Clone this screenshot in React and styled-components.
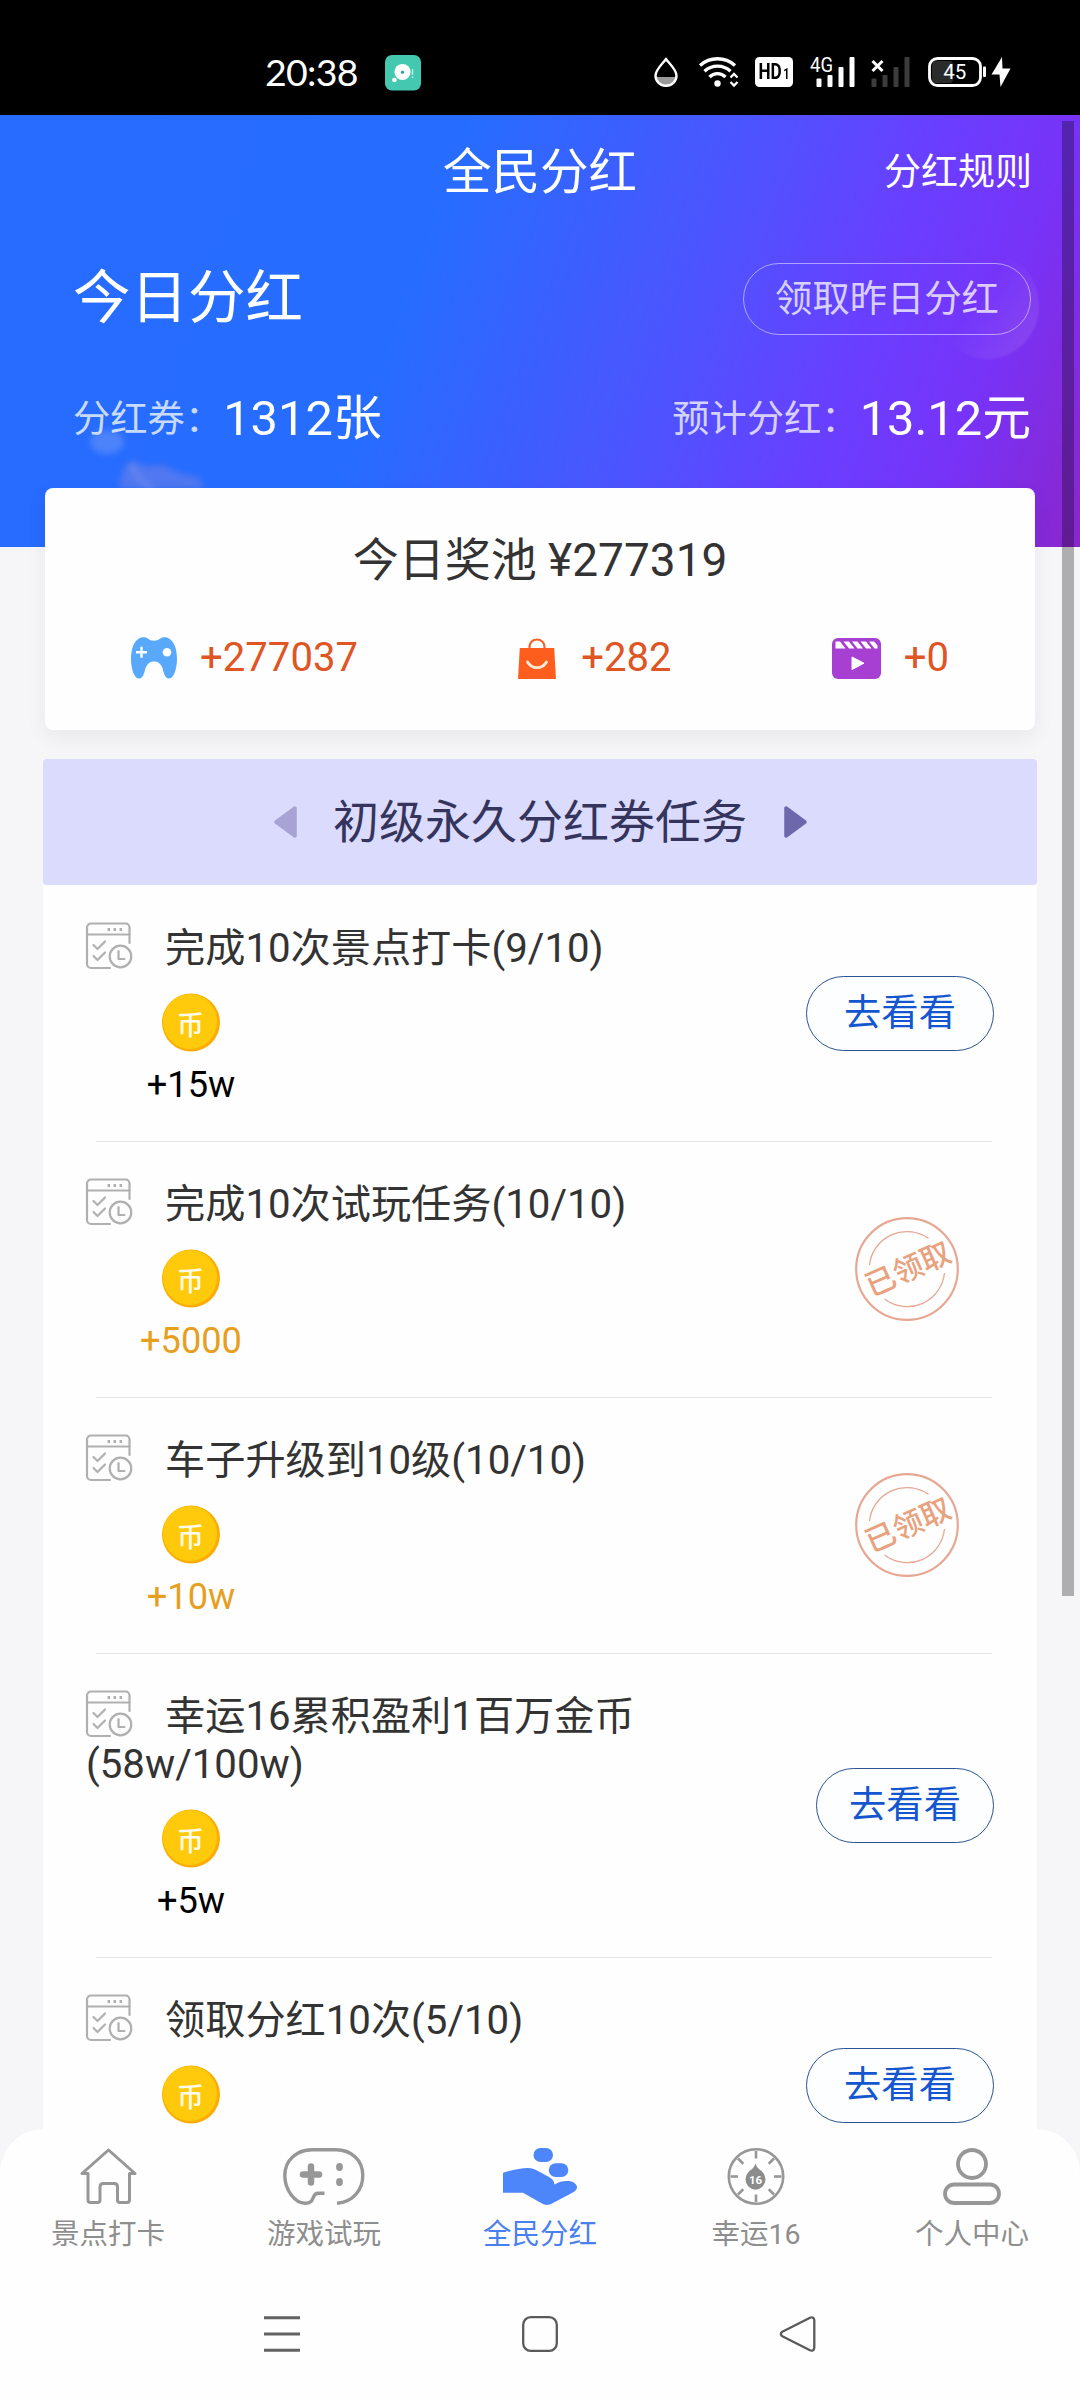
import React from 'react';
import styled, { createGlobalStyle } from 'styled-components';

const GlobalStyle = createGlobalStyle`
  *, *::before, *::after { box-sizing: border-box; }
  html, body { margin: 0; padding: 0; }
  body {
    font-family: Roboto, "Noto Sans CJK SC", sans-serif;
    font-weight: 400;
    color: #333;
  }
  svg { display: block; flex: none; overflow: visible; }
`;

const Screen = styled.div`
  width: 1080px;
  height: 2400px;
  display: flex;
  flex-direction: column;
  overflow: hidden;
  background: #f6f6f8;
`;

/* ---------- status bar ---------- */

const StatusBar = styled.div`
  flex: none;
  height: 115px;
  padding: 29px 69px 0 265px;
  display: flex;
  justify-content: space-between;
  align-items: flex-start;
  background: #000;
  color: #fff;
`;

const StatusGroup = styled.div`
  height: 86px;
  display: flex;
  align-items: flex-start;
  gap: ${(p) => p.$gap}px;
`;

const Clock = styled.div`
  width: 95px;
  margin-top: 21px;
  font-family: Lato, Roboto, sans-serif;
  font-size: 37.5px;
  line-height: 44px;
  letter-spacing: -0.7px;
  white-space: nowrap;
`;

const StatusIcon = styled.svg`
  margin-top: ${(p) => p.$mt || 28}px;
  margin-left: ${(p) => p.$ml || 0}px;
`;

const HdBadge = styled.div`
  width: 38px;
  height: 30px;
  margin: 28px 0 0 16.5px;
  display: flex;
  justify-content: center;
  border-radius: 4.5px;
  background: #fff;
  color: #000;
  font-weight: 700;
`;

const HdLetters = styled.div`
  flex: none;
  display: flex;
  align-items: baseline;
  gap: 2px;
  transform: scaleX(0.78);
`;

const HdLetter = styled.span`
  font-size: ${(p) => p.$size}px;
  line-height: 30px;
`;

/* ---------- scroll area & header ---------- */

const ScrollArea = styled.div`
  position: relative;
  flex: 1;
  min-height: 0;
  overflow: hidden;
`;

const ScrollThumb = styled.div`
  position: absolute;
  top: 6px;
  right: 6px;
  width: 12px;
  height: 1475px;
  background: rgba(0, 0, 0, 0.29);
`;

const Hero = styled.header`
  position: relative;
  height: 432px;
  color: #fff;
  background: linear-gradient(
    110deg,
    #276bff 0%,
    #266dff 38%,
    #3a60ff 50%,
    #4e53ff 62%,
    #693fff 76%,
    #7733f8 87%,
    #8a26cc 100%
  );
`;

const Bubble = styled.div`
  position: absolute;
  left: 936px;
  top: 138px;
  width: 103px;
  height: 106px;
  border-radius: 50%;
  background: linear-gradient(125deg, rgba(255, 255, 255, 0) 40%, rgba(255, 255, 255, 0.12) 100%);
  filter: blur(1px);
`;

const Clouds = styled.svg`
  position: absolute;
  left: 85px;
  top: 312px;
  filter: blur(3px);
`;

const HeroBody = styled.div`
  position: relative;
  display: flex;
  flex-direction: column;
`;

const TitleBar = styled.div`
  height: 114px;
  padding: 2px 48px 0;
  display: grid;
  grid-template-columns: 1fr auto 1fr;
  align-items: center;
`;

const PageTitle = styled.h1`
  grid-column: 2;
  margin: 0;
  font-size: 48.5px;
  line-height: 60px;
  font-weight: 400;
`;

const RulesLink = styled.a`
  justify-self: end;
  font-size: 37px;
  line-height: 44px;
`;

const HeroRow = styled.div`
  height: ${(p) => p.$h}px;
  padding: 0 49px 0 73px;
  display: flex;
  justify-content: space-between;
  align-items: center;
`;

const TodayTitle = styled.div`
  font-size: 57.5px;
  line-height: 72px;
`;

const ClaimButton = styled.button`
  width: 288px;
  height: 72px;
  padding: 0;
  border: 1.5px solid rgba(255, 255, 255, 0.5);
  border-radius: 36px;
  background: transparent;
  color: rgba(255, 255, 255, 0.75);
  font: inherit;
  font-size: 37.3px;
  line-height: 66px;
`;

const Stat = styled.div`
  display: flex;
  align-items: center;
`;

const StatLabel = styled.span`
  font-size: 37.3px;
  line-height: 48px;
  color: rgba(255, 255, 255, 0.75);
`;

const StatValue = styled.span`
  margin-left: 1px;
  font-size: 48.8px;
  line-height: 60px;
`;

/* ---------- pool card ---------- */

const PoolCard = styled.section`
  position: relative;
  height: 242px;
  margin: -59px 45px 29px;
  padding-top: 37.5px;
  border-radius: 8px;
  background: #fefefe;
  box-shadow: 0 8px 22px rgba(0, 0, 0, 0.06);
`;

const PoolTitle = styled.h2`
  margin: 0;
  font-size: 46px;
  line-height: 68px;
  font-weight: 400;
  text-align: center;
`;

const PoolItems = styled.div`
  margin-top: 39.5px;
  padding: 0 6px;
  display: flex;
  justify-content: space-around;
`;

const PoolItem = styled.div`
  height: 50px;
  display: flex;
  align-items: center;
  gap: ${(p) => p.$gap}px;
  font-size: 40.1px;
  line-height: 50px;
  color: #df5524;
`;

/* ---------- task list ---------- */

const TaskPanel = styled.section`
  margin: 0 43px;
  background: #fefefe;
`;

const LevelBar = styled.div`
  height: 126px;
  display: flex;
  justify-content: center;
  align-items: center;
  gap: 36.5px;
  border-radius: 3px;
  background: #dbdbfd;
  color: #34345c;
  font-size: 46px;
  line-height: 60px;
`;

const TaskRow = styled.div`
  padding: 0 43px;
  display: flex;
  justify-content: space-between;
  align-items: center;
`;

const Divider = styled.hr`
  height: 1px;
  margin: 0 45px -1px 53px;
  border: 0;
  background: #e3e3e8;
`;

const TaskMain = styled.div`
  width: 600px;
  height: ${(p) => (p.$tall ? 304 : 256)}px;
  padding-top: 37px;
`;

const TaskTitle = styled.div`
  font-size: 40.2px;
  line-height: 48px;
  svg {
    display: inline-block;
    margin-right: 32px;
    vertical-align: -7px;
  }
`;

const Reward = styled.div`
  width: 210px;
  margin-top: 19.5px;
  display: flex;
  flex-direction: column;
  align-items: center;
  font-size: 36.2px;
  line-height: 46px;
  color: ${(p) => (p.$claimed ? '#e69f1e' : '#000')};
`;

const RewardAmount = styled.span`
  margin-top: 10.5px;
`;

const GoButton = styled.button`
  width: ${(p) => (p.$narrow ? 178 : 188)}px;
  height: 75px;
  padding: 0;
  border: 1.5px solid #2c5293;
  border-radius: 38px;
  background: #fdfeff;
  color: #1456cf;
  font: inherit;
  font-size: 37.3px;
  line-height: 70px;
`;

const StampSvg = styled.svg`
  margin-right: 35px;
`;

/* ---------- bottom bars ---------- */

const TabBar = styled.nav`
  flex: none;
  height: 141px;
  padding-top: 19px;
  display: grid;
  grid-template-columns: repeat(5, 1fr);
  border-radius: 44px 44px 0 0;
  background: #fefefe;
`;

const Tab = styled.a`
  display: flex;
  flex-direction: column;
  align-items: center;
  gap: 11px;
  font-size: 28.5px;
  line-height: 38px;
  color: ${(p) => (p.$active ? '#4a80ee' : '#8e8e8e')};
`;

const SystemNav = styled.div`
  flex: none;
  height: 130px;
  padding: 0 264px 3px;
  display: flex;
  justify-content: space-between;
  align-items: center;
  background: #fefefe;
`;

/* ---------- icons ---------- */

const AppBadge = () => (
  <StatusIcon width="36" height="36" viewBox="0 0 36 36" $mt={25.5}>
    <rect width="36" height="35.5" rx="7" fill="#45c8b0" />
    <circle cx="17.5" cy="17" r="8" fill="#fff" />
    <circle cx="17.5" cy="17.2" r="1.6" fill="#2fa08c" />
    <circle cx="9.4" cy="25" r="2.3" fill="#fff" />
    <path d="M27.5 14v6M27.5 21.5v1.5" stroke="#b9f0e5" strokeWidth="1.5" />
  </StatusIcon>
);

const DropIcon = () => (
  <StatusIcon width="24" height="30" viewBox="0 0 24 30">
    <path d="M2 20 A10 10 0 0 0 22 20Z" fill="#9b9b9b" />
    <path
      d="M12 1.8C9.5 6 1.5 12.5 1.5 18.7a10.5 10 0 0 0 21 0C22.5 12.5 14.5 6 12 1.8Z"
      fill="none" stroke="#fff" strokeWidth="2.4" strokeLinejoin="round"
    />
  </StatusIcon>
);

const WifiIcon = () => (
  <StatusIcon width="39" height="30" viewBox="0 0 39 30" $ml={21}>
    <g fill="none" stroke="#fff" strokeWidth="3.4">
      <path d="M1 8.5C11-.5 26-.5 36 8.5" />
      <path d="M5.5 14.2C13 7.4 24 7.4 31.5 14.2" />
      <path d="M10.5 20C15 15.5 22 15.5 26.5 20" />
    </g>
    <circle cx="18.5" cy="26.5" r="3.2" fill="#fff" />
    <path d="M31.5 20.5L35 17l3.5 3.5M31.5 25L35 28.5 38.5 25" fill="none" stroke="#fff" strokeWidth="2.3" />
  </StatusIcon>
);

const SignalIcon = () => (
  <StatusIcon width="45" height="30" viewBox="0 0 45 30" $ml={17.5}>
    <text x="0" y="15" fontSize="19.5" textLength="23" lengthAdjust="spacingAndGlyphs" fill="#fff">4G</text>
    <g fill="#fff">
      <rect x="6.5" y="21.5" width="5" height="8.5" rx="1" />
      <rect x="17.5" y="18" width="5" height="12" rx="1" />
      <rect x="28.5" y="10" width="5" height="20" rx="1" />
      <rect x="39.5" y="0" width="5" height="30" rx="1" />
    </g>
  </StatusIcon>
);

const NoSignalIcon = () => (
  <StatusIcon width="39" height="30" viewBox="0 0 39 30" $ml={16}>
    <path d="M1.5 4l10 10M11.5 4l-10 10" stroke="#fff" strokeWidth="3" />
    <g fill="#3c3c3c">
      <rect x="0.5" y="21.5" width="5" height="8.5" rx="1" />
      <rect x="11.5" y="18" width="5" height="12" rx="1" />
      <rect x="22.5" y="10" width="5" height="20" rx="1" />
      <rect x="33.5" y="0" width="5" height="30" rx="1" />
    </g>
  </StatusIcon>
);

const BatteryIcon = () => (
  <StatusIcon width="83" height="30" viewBox="0 0 83 30" $ml={18}>
    <rect x="4" y="4" width="21" height="22" rx="4" fill="#2b2b2b" />
    <rect x="1.5" y="1.5" width="51" height="27" rx="8" fill="none" stroke="#fff" strokeWidth="2.8" />
    <rect x="55" y="9.5" width="3" height="10.5" rx="1" fill="#fff" />
    <text x="26.8" y="22" fontSize="20.5" textAnchor="middle" fill="#fff">45</text>
    <path d="M74 0L63.5 17.5H71.5L72.5 30 82.5 11.5H74.5Z" fill="#fff" />
  </StatusIcon>
);

const PadIcon = () => (
  <svg width="46" height="42" viewBox="0 0 46 42">
    <path
      d="M10 .6C12 0 15 .2 17 1.8 20 4.4 26 4.4 29 1.8 31 .2 34 0 36 .6 43 3 46 12 46 22 46 31 43 41 38.5 41.5 33 42 32.5 33 31 30 29.5 26.5 27 24.5 23 24.5S16.5 26.5 15 30C13.5 33 13 42 7.5 41.5 3 41 0 31 0 22 0 12 3 3 10 .6Z"
      fill="#58a8fb"
    />
    <path d="M10.5 9.8v11M5 15.3h11" stroke="#fff" strokeWidth="2.4" />
    <circle cx="36" cy="15.3" r="4.3" fill="#fff" />
  </svg>
);

const BagIcon = () => (
  <svg width="38" height="41" viewBox="0 0 38 41">
    <path d="M11.5 11V8.5a7.5 7 0 0 1 15 0V11" fill="none" stroke="#f4622a" strokeWidth="2.2" />
    <path d="M1.8 10H36.2L38 41H0Z" fill="#fd5e1d" />
    <path d="M9.5 24c4.5 7.5 14.5 7.5 19 0" fill="none" stroke="#ffe9d6" strokeWidth="2.8" strokeLinecap="round" />
  </svg>
);

const FilmIcon = () => (
  <svg width="49" height="41" viewBox="0 0 49 41">
    <rect width="49" height="41" rx="6" fill="#a63fd2" />
    <path
      d="M3.5 3.5H8L13.5 10.5H3.5ZM11.5 3.5H17L22.5 10.5H17ZM20 3.5H25.5L31 10.5H25.5ZM28.5 3.5H34L39.5 10.5H34ZM37 3.5H42L45.5 7.5V10.5H42.5Z"
      fill="#fff"
    />
    <path d="M20 19v12.5l12-6.3Z" fill="#fff" stroke="#fff" strokeWidth="1" strokeLinejoin="round" />
  </svg>
);

const Arrow = ({ right }) => (
  <svg width="23" height="32" viewBox="0 0 23 32">
    <path
      d={right ? 'M2 2V30L21 16Z' : 'M21 2V30L2 16Z'}
      fill={right ? '#6d67ac' : '#a7a3d4'}
      stroke={right ? '#6d67ac' : '#a7a3d4'}
      strokeWidth="3.5"
      strokeLinejoin="round"
    />
  </svg>
);

const TaskIcon = () => (
  <svg width="47" height="47" viewBox="0 0 47 47">
    <g fill="none" stroke="#b0b0b0" strokeWidth="2.2" strokeLinecap="round" strokeLinejoin="round">
      <path d="M43.5 21V5.5a4 4 0 0 0-4-4H5a4 4 0 0 0-4 4V42a4 4 0 0 0 4 4H24" />
      <path d="M1 12.5H43.5" />
      <path d="M7.5 23l4 4 7.5-7.5M7.5 34l4 4 7.5-7.5" />
      <circle cx="34.5" cy="34.5" r="10.8" />
      <path d="M32.5 29V37H38.5" />
    </g>
    <g fill="#b0b0b0">
      <rect x="21.5" y="6" width="2.6" height="3" />
      <rect x="27.5" y="6" width="2.6" height="3" />
      <rect x="33.5" y="6" width="2.6" height="3" />
    </g>
  </svg>
);

const Coin = () => (
  <svg width="58" height="59" viewBox="0 0 58 59">
    <circle cx="29" cy="29.5" r="29" fill="#fdac03" />
    <ellipse cx="28" cy="28.5" rx="27" ry="27.5" fill="#ffca0c" />
    <text x="28.5" y="42" fontSize="27" fontWeight="500" textAnchor="middle" fill="#fffbe8">币</text>
  </svg>
);

const ClaimedStamp = () => (
  <StampSvg width="104" height="104" viewBox="0 0 104 104">
    <g fill="none" stroke="#e6a893">
      <circle cx="52" cy="52" r="50.8" strokeWidth="2.2" />
      <path d="M14.5 48A37.5 37.5 0 0 1 73.5 21.5" strokeWidth="1.3" />
      <path d="M29.5 82A37.5 37.5 0 0 0 89.5 56" strokeWidth="1.3" />
    </g>
    <text
      x="53" y="63" fontSize="30" fontWeight="500" textAnchor="middle"
      fill="#e8a27e" transform="rotate(-24 52 52)"
    >
      已领取
    </text>
  </StampSvg>
);

const HomeIcon = () => (
  <svg width="57" height="57" viewBox="0 0 57 57">
    <path
      d="M28.5 2L2 25.5H8V52q0 2.5 2.5 2.5H17.5q2.5 0 2.5-2.5V39q0-3.5 3.5-3.5H34q3.5 0 3.5 3.5V52q0 2.5 2.5 2.5H47q2.5 0 2.5-2.5V25.5H55Z"
      fill="none" stroke="#979797" strokeWidth="3" strokeLinejoin="round"
    />
  </svg>
);

const GameIcon = () => (
  <svg width="82" height="57" viewBox="0 0 82 57">
    <g fill="none" stroke="#979797">
      <path
        d="M54 55.3C70 54 79.8 42 79.8 27.5 79.8 12 68 1.8 53 1.8H29C14 1.8 1.8 12 1.8 27.5 1.8 42 12 55.3 22 55.3 33 55.3 28 45.3 35 45.3H41.5"
        strokeWidth="3.4"
      />
      <path d="M28 18.5v16M20 26.5h16" strokeWidth="6.5" strokeLinecap="round" />
    </g>
    <ellipse cx="56.5" cy="19" rx="3.4" ry="4" fill="#979797" />
    <ellipse cx="56.5" cy="34" rx="3.4" ry="4" fill="#979797" />
  </svg>
);

const HandIcon = () => (
  <svg width="74" height="57" viewBox="0 0 74 57">
    <g fill="#4c86fa">
      <rect x="30.5" y="0" width="19.5" height="14" rx="7" />
      <rect x="45.8" y="15.3" width="19.5" height="13.7" rx="6.8" />
      <path d="M0 24.7C8 22.5 18 20 25 20 29 20 31 21 34 22.5L46 29C50 31.5 51 33 51.5 36.5 56 33.5 61 32.5 66 33 71 33.5 75.5 37.5 73.5 41 72.5 43 70 44.5 67 46L49 55.5C45 57.5 42 57.3 39 55.5L20 44.7H0Z" />
    </g>
  </svg>
);

const DialIcon = () => (
  <svg width="58" height="57" viewBox="0 0 58 57">
    <g fill="none" stroke="#979797" strokeWidth="2.6">
      <circle cx="29" cy="28.5" r="27.2" />
      {[0, 45, 90, 135, 180, 225, 270, 315].map((a) => (
        <path key={a} d="M29 3V10.5" transform={`rotate(${a} 29 28.5)`} />
      ))}
    </g>
    <path d="M28.5 15.5C30 20.5 33 21.5 35.5 24a10 10.3 0 1 1-14 0C24 21.5 27 20.5 28.5 15.5Z" fill="#8c8c8c" />
    <text x="28.5" y="35.8" fontSize="11.5" fontWeight="700" textAnchor="middle" fill="#fff">16</text>
  </svg>
);

const PersonIcon = () => (
  <svg width="58" height="57" viewBox="0 0 58 57">
    <g fill="none" stroke="#979797" strokeWidth="3.8">
      <circle cx="29" cy="16" r="14" />
      <rect x="2" y="36.5" width="54" height="18.5" rx="9.2" />
    </g>
  </svg>
);

const MenuKey = () => (
  <svg width="36" height="36" viewBox="0 0 36 36">
    <path d="M0 1.7h36M0 18h36M0 34.3h36" stroke="#626262" strokeWidth="3" />
  </svg>
);

const HomeKey = () => (
  <svg width="36" height="36" viewBox="0 0 36 36">
    <rect x="1.2" y="1.2" width="33.6" height="33.6" rx="7.5" fill="none" stroke="#5a5a5a" strokeWidth="2.3" />
  </svg>
);

const BackKey = () => (
  <svg width="36" height="36" viewBox="0 0 36 36">
    <path
      d="M2.3 15.8L30 1.7C32.5.7 34.3 1.7 34.3 4.5V31.5C34.3 34.3 32.5 35.3 30 34.3L2.3 20.2C.3 18.9.3 17.1 2.3 15.8Z"
      fill="none" stroke="#5a5a5a" strokeWidth="2.3" strokeLinejoin="round"
    />
  </svg>
);

/* ---------- data ---------- */

const pool = [
  { icon: <PadIcon />, value: '+277037', gap: 23 },
  { icon: <BagIcon />, value: '+282', gap: 25 },
  { icon: <FilmIcon />, value: '+0', gap: 23 },
];

const tasks = [
  { title: '完成10次景点打卡(9/10)', reward: '+15w' },
  { title: '完成10次试玩任务(10/10)', reward: '+5000', claimed: true },
  { title: '车子升级到10级(10/10)', reward: '+10w', claimed: true },
  { title: '幸运16累积盈利1百万金币 (58w/100w)', reward: '+5w', tall: true },
  { title: '领取分红10次(5/10)' },
];

const tabs = [
  { label: '景点打卡', icon: <HomeIcon /> },
  { label: '游戏试玩', icon: <GameIcon /> },
  { label: '全民分红', icon: <HandIcon />, active: true },
  { label: '幸运16', icon: <DialIcon /> },
  { label: '个人中心', icon: <PersonIcon /> },
];

export default function App() {
  return (
    <>
      <GlobalStyle />
      <Screen>
        <StatusBar>
          <StatusGroup $gap={25}>
            <Clock>20:38</Clock>
            <AppBadge />
          </StatusGroup>
          <StatusGroup $gap={0}>
            <DropIcon />
            <WifiIcon />
            <HdBadge>
              <HdLetters>
                <HdLetter $size={22}>HD</HdLetter>
                <HdLetter $size={14}>1</HdLetter>
              </HdLetters>
            </HdBadge>
            <SignalIcon />
            <NoSignalIcon />
            <BatteryIcon />
          </StatusGroup>
        </StatusBar>

        <ScrollArea>
          <Hero>
            <Bubble />
            <Clouds width="120" height="66" viewBox="0 0 120 66">
              <ellipse cx="22" cy="15" rx="17" ry="12" fill="rgba(150,175,240,.34)" />
              <path d="M34 62C36 46 40 34 50 34 60 40 66 40 76 38 88 40 92 48 104 48 116 50 118 56 118 62Z" fill="rgba(150,140,215,.38)" />
              <path d="M46 36C50 50 58 58 70 62" fill="none" stroke="rgba(170,180,240,.3)" strokeWidth="4" />
            </Clouds>
            <HeroBody>
              <TitleBar>
                <PageTitle>全民分红</PageTitle>
                <RulesLink>分红规则</RulesLink>
              </TitleBar>
              <HeroRow $h={140}>
                <TodayTitle>今日分红</TodayTitle>
                <ClaimButton>领取昨日分红</ClaimButton>
              </HeroRow>
              <HeroRow $h={100}>
                <Stat>
                  <StatLabel>分红券：</StatLabel>
                  <StatValue>1312张</StatValue>
                </Stat>
                <Stat>
                  <StatLabel>预计分红：</StatLabel>
                  <StatValue>13.12元</StatValue>
                </Stat>
              </HeroRow>
            </HeroBody>
          </Hero>

          <PoolCard>
            <PoolTitle>今日奖池 ¥277319</PoolTitle>
            <PoolItems>
              {pool.map((item) => (
                <PoolItem key={item.value} $gap={item.gap}>
                  {item.icon}
                  <span>{item.value}</span>
                </PoolItem>
              ))}
            </PoolItems>
          </PoolCard>

          <TaskPanel>
            <LevelBar>
              <Arrow />
              <span>初级永久分红券任务</span>
              <Arrow right />
            </LevelBar>
            {tasks.map((task, i) => (
              <React.Fragment key={task.title}>
                <TaskRow>
                  <TaskMain $tall={task.tall}>
                    <TaskTitle>
                      <TaskIcon />
                      {task.title}
                    </TaskTitle>
                    <Reward $claimed={task.claimed}>
                      <Coin />
                      {task.reward && <RewardAmount>{task.reward}</RewardAmount>}
                    </Reward>
                  </TaskMain>
                  {task.claimed ? <ClaimedStamp /> : <GoButton $narrow={task.tall}>去看看</GoButton>}
                </TaskRow>
                {i < tasks.length - 1 && <Divider />}
              </React.Fragment>
            ))}
          </TaskPanel>
          <ScrollThumb />
        </ScrollArea>

        <TabBar>
          {tabs.map((tab) => (
            <Tab key={tab.label} $active={tab.active}>
              {tab.icon}
              <span>{tab.label}</span>
            </Tab>
          ))}
        </TabBar>
        <SystemNav>
          <MenuKey />
          <HomeKey />
          <BackKey />
        </SystemNav>
      </Screen>
    </>
  );
}
